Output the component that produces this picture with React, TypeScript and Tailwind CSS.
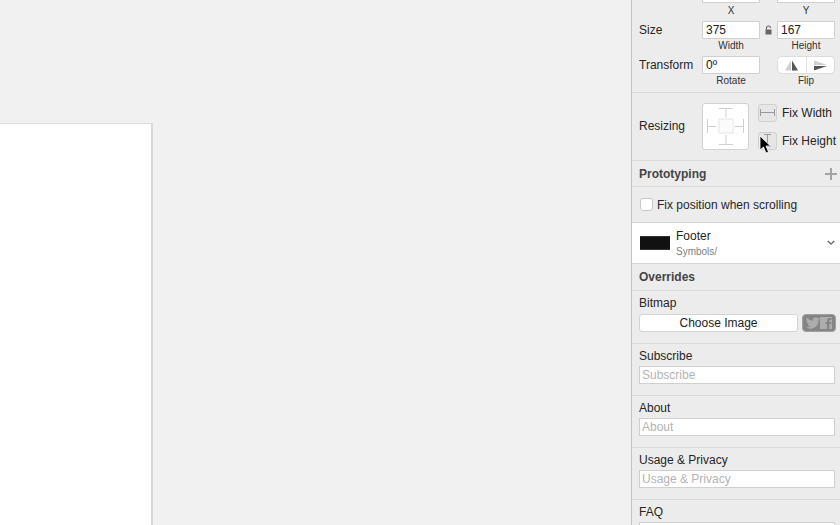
const font = { fontFamily: '"Liberation Sans", Arial, sans-serif' };

function Field({ value }: { value: string }) {
  return (
    <div className="w-[58px] h-[18px] bg-white border border-[#d0d0d0] rounded-[1px] px-[3px] text-[12px] leading-[16px] text-[#222]">
      {value}
    </div>
  );
}

function Divider() {
  return <div className="h-px bg-[#d9d9d9]" />;
}

function Override({ label, placeholder = label }: { label: string; placeholder?: string }) {
  return (
    <div className="pl-[7px] pr-[5px] pb-[11px]">
      <div className="h-[22px] pt-[5px] text-[12px] leading-[15px] text-[#262626]">{label}</div>
      <div className="h-[18px] bg-white border border-[#cfcfcf] px-[2px] text-[12px] leading-[16px] text-[#b4b4b4]">
        {placeholder}
      </div>
    </div>
  );
}

function ResizeDiagram() {
  return (
    <svg width="48" height="48" viewBox="0 0 48 48" fill="none" className="block">
      <rect x="0.5" y="0.5" width="46" height="46" rx="2.5" fill="#fff" stroke="#d2d2d2" />
      <rect x="17" y="16" width="14" height="14" fill="#fbfbfb" stroke="#e6e6e6" />
      <g stroke="#d0d0d0">
        <path d="M17 5.500h14M24 5.500v9" />
        <path d="M17 41.500h14M24 32v9.500" />
        <path d="M5.500 16v14M5.500 23.500h9" />
        <path d="M41.500 16v14M32.500 23.500h9" />
      </g>
    </svg>
  );
}

export default function App() {
  return (
    <div className="flex w-[840px] h-[525px] overflow-hidden bg-[#f1f1f1]" style={font}>
      <main className="flex-1 pt-[123px]">
        <div className="w-[153px] h-[402px] bg-white border-t border-r-2 border-[#d9d9d9]" />
      </main>

      <aside className="relative w-[209px] h-[525px] overflow-hidden bg-[#ececec] border-l border-[#c4c4c4]">
        <div className="h-[3px] flex pl-[70px] overflow-hidden items-end gap-[17px]">
          <div className="w-[58px] h-[3px] shrink-0 bg-white border border-t-0 border-[#d0d0d0]" />
          <div className="w-[58px] h-[3px] shrink-0 bg-white border border-t-0 border-[#d0d0d0]" />
        </div>
        <div className="flex pl-[70px] gap-[17px] h-[18px] text-[10px] leading-[15px] text-[#333] text-center">
          <div className="w-[58px]">X</div>
          <div className="w-[58px]">Y</div>
        </div>

        <div className="flex items-center h-[18px] pl-[7px]">
          <div className="w-[63px] text-[12px] text-[#262626]">Size</div>
          <Field value="375" />
          <div className="w-[17px] flex justify-center">
            <svg width="9" height="10" viewBox="0 0 9 10">
              <path d="M2.500 4.500V3a2 2 0 0 1 4 0" fill="none" stroke="#666" strokeWidth="1.1" />
              <rect x="1.500" y="4.500" width="6" height="5" fill="#666" />
            </svg>
          </div>
          <Field value="167" />
        </div>
        <div className="flex pl-[70px] gap-[17px] h-[17px] text-[10px] leading-[13px] text-[#333] text-center">
          <div className="w-[58px]">Width</div>
          <div className="w-[58px]">Height</div>
        </div>

        <div className="flex items-center h-[18px] pl-[7px]">
          <div className="w-[63px] text-[12px] text-[#262626] whitespace-nowrap">Transform</div>
          <Field value="0º" />
          <div className="ml-[17px] w-[58px] h-[18px] flex bg-white border border-[#dcdcdc] rounded-[5px]">
            <div className="flex-1 flex items-center justify-center border-r border-[#e2e2e2]">
              <svg width="15" height="11" viewBox="0 0 15 11">
                <path d="M7 0.500V10.500H1Z" fill="#cfcfcf" />
                <path d="M8 0.500V10.500H14Z" fill="#555" />
              </svg>
            </div>
            <div className="flex-1 flex items-center justify-center">
              <svg width="15" height="11" viewBox="0 0 15 11">
                <path d="M1 0.500L14 5H1Z" fill="#cfcfcf" />
                <path d="M1 6H14L1 10.500Z" fill="#555" />
              </svg>
            </div>
          </div>
        </div>
        <div className="flex pl-[70px] gap-[17px] h-[18px] text-[10px] leading-[13px] text-[#333] text-center">
          <div className="w-[58px]">Rotate</div>
          <div className="w-[58px]">Flip</div>
        </div>
        <Divider />

        <div className="h-[67px] flex items-center pl-[7px]">
          <div className="w-[63px] pb-[2px] text-[12px] text-[#262626]">Resizing</div>
          <ResizeDiagram />
          <div className="ml-[8px] flex flex-col gap-[10px]">
            <div className="flex items-center gap-[5px]">
              <div className="w-[19px] h-[18px] flex items-center justify-center bg-[#e6e6e6] border border-[#d0d0d0] rounded-[3px]">
                <svg width="15" height="9" viewBox="0 0 15 9" fill="none" stroke="#999">
                  <path d="M0.500 1v7M14.500 1v7M0.500 4.500h14" />
                </svg>
              </div>
              <span className="text-[12px] text-[#262626] whitespace-nowrap">Fix Width</span>
            </div>
            <div className="flex items-center gap-[5px]">
              <div className="w-[19px] h-[18px] flex items-center justify-center bg-[#e6e6e6] border border-[#d0d0d0] rounded-[3px]">
                <svg width="9" height="13" viewBox="0 0 9 13" fill="none" stroke="#999">
                  <path d="M1 0.500h7M1 12.500h7M4.500 0.500v12" />
                </svg>
              </div>
              <span className="text-[12px] text-[#262626] whitespace-nowrap">Fix Height</span>
            </div>
          </div>
        </div>
        <Divider />

        <div className="h-[25px] flex items-center justify-between pl-[7px] pr-[3px]">
          <span className="text-[12px] font-bold text-[#444]">Prototyping</span>
          <svg width="12" height="12" viewBox="0 0 12 12" stroke="#a3a3a3" strokeWidth="2">
            <path d="M6 0v12M0 6h12" />
          </svg>
        </div>
        <Divider />

        <div className="h-[35px] flex items-center pl-[8px] gap-[4px]">
          <div className="w-[13px] h-[13px] bg-white border border-[#c8c8c8] rounded-[3px]" />
          <span className="text-[12px] text-[#262626] whitespace-nowrap">Fix position when scrolling</span>
        </div>

        <div className="h-[42px] bg-white border-y border-[#d6d6d6] flex items-center pl-[8px] pr-[5px]">
          <div className="w-[30px] h-[14px] bg-[#111] border-y border-[#333] shrink-0" />
          <div className="ml-[6px] flex-1">
            <div className="text-[12px] leading-[15px] text-[#222]">Footer</div>
            <div className="text-[10px] leading-[13px] mt-[1px] text-[#808080]">Symbols/</div>
          </div>
          <svg width="8" height="6" viewBox="0 0 8 6" fill="none" stroke="#666" strokeWidth="1.3">
            <path d="M0.800 1l3.200 3.200L7.200 1" />
          </svg>
        </div>

        <div className="h-[26px] flex items-center pl-[7px]">
          <span className="text-[12px] font-bold text-[#444]">Overrides</span>
        </div>
        <Divider />

        <div className="pl-[7px] pr-[4px] pb-[11px]">
          <div className="h-[23px] pt-[5px] text-[12px] leading-[15px] text-[#262626]">Bitmap</div>
          <div className="flex gap-[4px]">
            <div className="w-[160px] h-[18px] bg-white border border-[#d4d4d4] rounded-[3px] flex items-center justify-center text-[12px] text-[#222]">
              Choose Image
            </div>
            <div className="w-[34px] h-[18px] bg-[#858585] border border-[#a0a0a0] rounded-[4px] flex items-center justify-between px-[3px]">
              <svg width="14" height="12" viewBox="0 0 24 20" fill="#adadad">
                <path d="M24 2.400a10 10 0 0 1-2.800.8 5 5 0 0 0 2.200-2.700 10 10 0 0 1-3.100 1.200A4.900 4.900 0 0 0 11.900 6.100 14 14 0 0 1 1.700 1a4.900 4.900 0 0 0 1.500 6.600 5 5 0 0 1-2.200-.6 4.900 4.900 0 0 0 3.900 4.900 5 5 0 0 1-2.200.1 4.900 4.900 0 0 0 4.600 3.400A10 10 0 0 1 0 17.400 14 14 0 0 0 21.500 5c1-.7 1.800-1.600 2.500-2.600z" />
              </svg>
              <div className="w-[12px] h-[12px] bg-[#adadad] flex items-end justify-end">
                <svg width="7" height="11" viewBox="0 0 7 11" fill="#858585">
                  <path d="M2 11V6H0.500V4H2V2.800C2 1 3 0 4.700 0H6.500V2H5.300C4.600 2 4.300 2.300 4.300 3V4H6.500L6.200 6H4.300V11Z" />
                </svg>
              </div>
            </div>
          </div>
        </div>
        <Divider />

        <Override label="Subscribe" />
        <Divider />
        <Override label="About" />
        <Divider />
        <Override label="Usage & Privacy" />
        <Divider />
        <Override label="FAQ" placeholder="" />

        <svg width="13" height="19" viewBox="0 0 13 19" className="absolute left-[127px] top-[135px]">
          <path d="M1 1V15L4.500 12L7 18L9.500 17L7 11H11.500Z" fill="#000" stroke="#fff" strokeWidth="0.8" />
        </svg>
      </aside>
    </div>
  );
}
